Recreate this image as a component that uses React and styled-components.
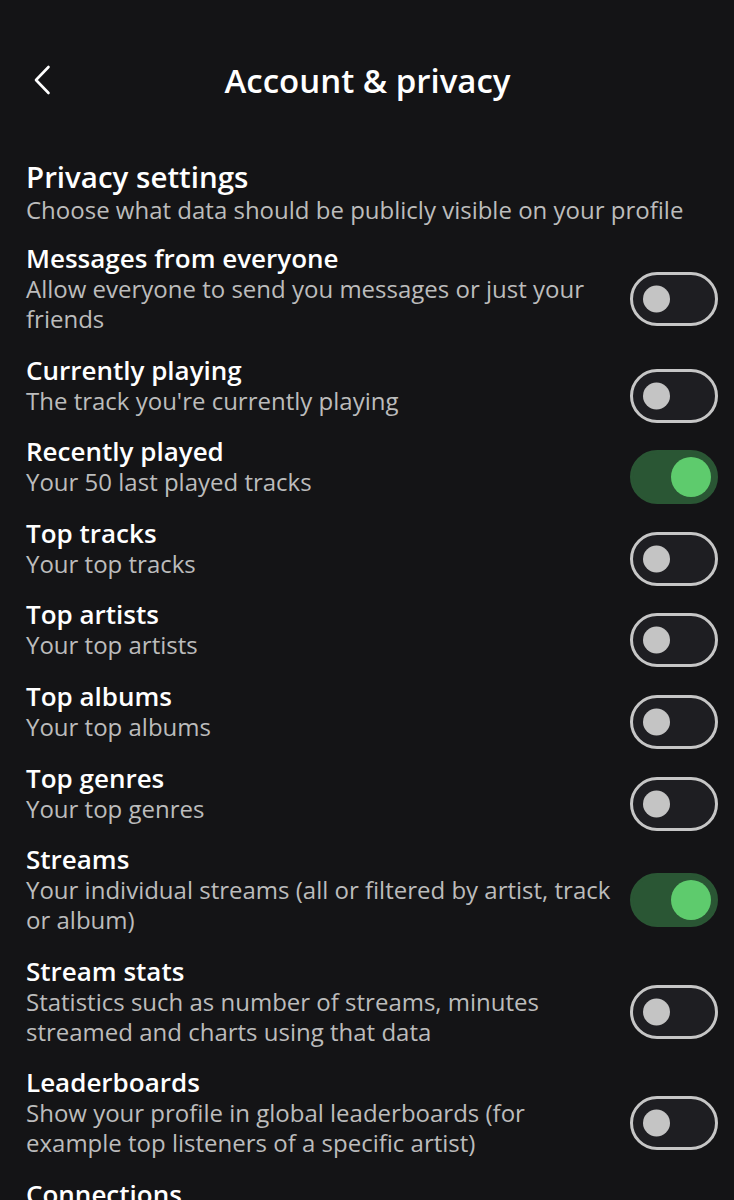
import React, { useState } from 'react';
import styled, { createGlobalStyle } from 'styled-components';

const GlobalStyle = createGlobalStyle`
  html, body {
    margin: 0;
    background: #141416;
  }
  body {
    font-family: "Open Sans", Roboto, "Liberation Sans", sans-serif;
    color: #ffffff;
  }
`;

const Page = styled.div`
  padding: 40px 16px 0 26px;
  height: 1200px;
  box-sizing: border-box;
  overflow: hidden;
`;

const Header = styled.header`
  display: flex;
  align-items: center;
  justify-content: center;
  position: relative;
  height: 80px;
  margin-bottom: 40px;
`;

const BackButton = styled.button`
  position: absolute;
  left: 6px;
  top: 24px;
  width: 24px;
  height: 32px;
  padding: 0;
  border: none;
  background: none;
  color: #fff;
  cursor: pointer;
`;

const Title = styled.h1`
  margin: 0 9px 0 0;
  font-size: 33px;
  font-weight: 600;
  letter-spacing: 0;
`;

const SectionTitle = styled.h2`
  margin: 0;
  font-size: 29.5px;
  line-height: 34px;
  font-weight: 600;
  letter-spacing: 0;
`;

const SectionSub = styled.p`
  margin: 0 0 16px;
  font-size: 24px;
  line-height: 32px;
  color: #bcbcbc;
`;

const List = styled.div`
  display: flex;
  flex-direction: column;
  gap: 19.6px;
`;

const Row = styled.div`
  display: flex;
  align-items: center;
  gap: 12px;
`;

const RowText = styled.div`
  flex: 1;
  min-width: 0;
`;

const RowTitle = styled.div`
  font-size: 26px;
  line-height: 32px;
  font-weight: 600;
`;

const RowDesc = styled.div`
  font-size: 24px;
  line-height: 30px;
  color: #bcbcbc;
`;

const Track = styled.button`
  flex: none;
  position: relative;
  width: 88px;
  height: 54px;
  margin: 11px 0 -11px;
  padding: 0;
  border-radius: 27px;
  box-sizing: border-box;
  border: 3px solid ${p => (p.$on ? '#2a5634' : '#c6c6c6')};
  background: ${p => (p.$on ? '#2a5634' : '#1e1e22')};
  cursor: pointer;
`;

const Knob = styled.span`
  position: absolute;
  top: 50%;
  transform: translateY(-50%);
  border-radius: 50%;
  width: ${p => (p.$on ? '40px' : '27px')};
  height: ${p => (p.$on ? '40px' : '27px')};
  left: ${p => (p.$on ? '38px' : '10px')};
  background: ${p => (p.$on ? '#5ecb6d' : '#c4c4c4')};
`;

const Toggle = ({ on, onClick }) => (
  <Track $on={on} onClick={onClick}>
    <Knob $on={on} />
  </Track>
);

const settings = [
  { title: 'Messages from everyone', desc: 'Allow everyone to send you messages or just your friends', on: false },
  { title: 'Currently playing', desc: "The track you're currently playing", on: false },
  { title: 'Recently played', desc: 'Your 50 last played tracks', on: true },
  { title: 'Top tracks', desc: 'Your top tracks', on: false },
  { title: 'Top artists', desc: 'Your top artists', on: false },
  { title: 'Top albums', desc: 'Your top albums', on: false },
  { title: 'Top genres', desc: 'Your top genres', on: false },
  { title: 'Streams', desc: 'Your individual streams (all or filtered by artist, track or album)', on: true },
  { title: 'Stream stats', desc: 'Statistics such as number of streams, minutes streamed and charts using that data', on: false },
  { title: 'Leaderboards', desc: 'Show your profile in global leaderboards (for example top listeners of a specific artist)', on: false },
];

export default function App() {
  const [state, setState] = useState(settings.map(s => s.on));

  const flip = i => setState(prev => prev.map((v, j) => (j === i ? !v : v)));

  return (
    <>
      <GlobalStyle />
      <Page>
        <Header>
          <BackButton aria-label="Back">
            <svg width="24" height="32" viewBox="0 0 24 32" fill="none">
              <path d="M16.5 3 L4 16 L16.5 29" stroke="currentColor" strokeWidth="2.6" strokeLinecap="round" strokeLinejoin="round" />
            </svg>
          </BackButton>
          <Title>Account &amp; privacy</Title>
        </Header>

        <SectionTitle>Privacy settings</SectionTitle>
        <SectionSub>Choose what data should be publicly visible on your profile</SectionSub>

        <List>
          {settings.map((s, i) => (
            <Row key={s.title}>
              <RowText>
                <RowTitle>{s.title}</RowTitle>
                <RowDesc>{s.desc}</RowDesc>
              </RowText>
              <Toggle on={state[i]} onClick={() => flip(i)} />
            </Row>
          ))}
          <Row>
            <RowText>
              <RowTitle>Connections</RowTitle>
            </RowText>
          </Row>
        </List>
      </Page>
    </>
  );
}
